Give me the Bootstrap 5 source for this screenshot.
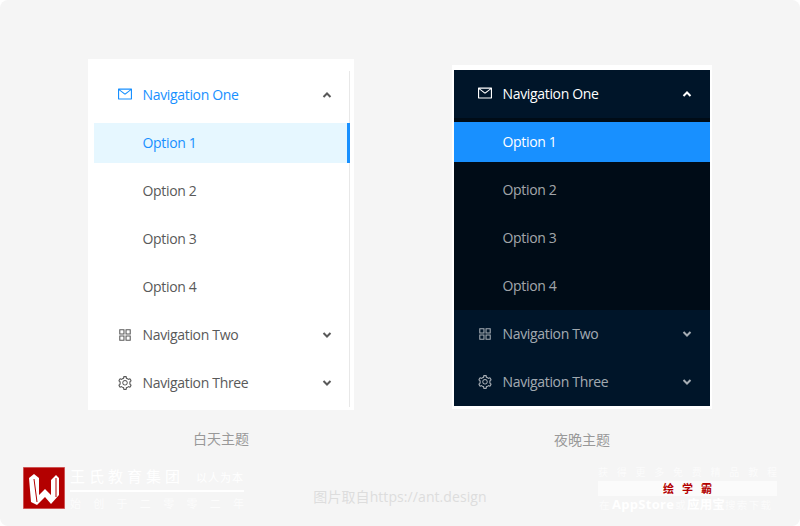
<!DOCTYPE html>
<html lang="zh-CN">
<head>
<meta charset="utf-8">
<title>Ant Design 导航菜单</title>
<link href="https://cdn.jsdelivr.net/npm/bootstrap@5.3.0/dist/css/bootstrap.min.css" rel="stylesheet">
<style>
html,body{margin:0;height:100%;background:#fff;overflow:hidden}
body{font-family:"Open Sans","Noto Sans CJK SC",sans-serif;font-size:14px}
.stage{width:800px;height:526px;background:#f5f5f5;border-radius:8px;position:relative}
.panels{padding:59px 0 0 88px}
.col-light{width:266px}
.col-dark{width:260px;margin-left:98px;margin-top:6px}
.sheet{background:#fff}
.sheet-light{padding:12px 4px 3px 6px}
.sheet-dark{padding:5px 2px 3px}
.menu-light{border-right:1px solid #e8e8e8;padding:4px 0;color:#595959}
.menu-dark{background:#001529;color:rgba(255,255,255,.65);padding:4px 0}
.sub-dark{background:#000c17;padding:4px 0}
.entry{height:40px;padding-left:24px;margin-bottom:8px;line-height:40px;white-space:nowrap;letter-spacing:-.33px}
.entry:last-child{margin-bottom:0}
.entry svg.glyph{width:14px;height:14px;margin-right:10.5px;fill:currentColor;flex:none}
.entry svg.raised{margin-top:-2px}
.opt{padding-left:48.5px}
.chev{width:10px;height:6px;margin-left:auto;margin-right:18px;fill:none;stroke:currentColor;stroke-width:2;flex:none}
.menu-light .chev{margin-right:17px}
.menu-light .open{color:#1890ff}
.menu-light .open .chev{color:#595959}
.menu-light .picked{background:#e6f7ff;color:#1890ff;border-right:3px solid #1890ff;margin-right:-1px}
.menu-dark .open{color:#fff;margin-bottom:4px}
.menu-dark .picked{background:#1890ff;color:#fff}
.caption{color:#999;font-size:14px;line-height:20px;text-align:center}
.col-light .caption{margin-top:19px}
.col-dark .caption{margin-top:21px}
.foot{display:grid;grid-template-columns:1fr auto 1fr;align-items:start;padding:0 23px;position:absolute;left:0;top:466px;width:800px}
.brand-mark{width:42px;height:42px;margin:1px 5px 0 0;flex:none}
.brand{width:174px;color:#fff}
.brand-top{height:20px;line-height:20px;font-size:15px;letter-spacing:4px;white-space:nowrap;margin-bottom:4px}
.brand-top span{font-size:11px;letter-spacing:1px;margin-left:12px}
.brand-rule{height:2px;background:#fff;margin-bottom:5px}
.brand-sub{font-size:11px;line-height:14px;opacity:.75}
.credit{color:#ddd;font-size:14px;line-height:21px;letter-spacing:.08px;padding-top:20px}
.promo{width:179px;justify-self:end;color:#fff}
.promo-line{font-size:10px;line-height:12px;opacity:.7;margin-bottom:3px}
.promo-strip{background:#fbfbfb;height:15px;line-height:15px;color:#b30000;font-weight:700;font-size:11px;text-align:center;letter-spacing:8px;padding-left:8px;font-family:"Noto Sans CJK SC",sans-serif}
.promo-last{font-size:11px;line-height:16px;white-space:nowrap;padding-left:1px}
.promo-last b{font-size:12.5px;letter-spacing:.1px}
.promo-last .latin{font-size:13px;letter-spacing:.3px;margin:0 1px}
.promo-last em{font-style:normal;opacity:.7;font-size:10.5px;letter-spacing:1.4px}
.icon-defs{display:none}
</style>
</head>
<body>
<svg class="icon-defs" aria-hidden="true">
  <symbol id="i-mail" viewBox="64 64 896 896"><path d="M928 160H96c-17.7 0-32 14.3-32 32v640c0 17.7 14.3 32 32 32h832c17.7 0 32-14.3 32-32V192c0-17.7-14.3-32-32-32zm-40 110.8V792H136V270.8l-27.6-21.5 39.3-50.5 42.8 33.3h643.1l42.8-33.3 39.3 50.5-27.7 21.5zM833.6 232L512 482 190.4 232l-42.8-33.3-39.3 50.5 27.6 21.5 341.6 265.6a55.99 55.99 0 0 0 68.7 0L888 270.8l27.6-21.5-39.3-50.5-42.7 33.2z"/></symbol>
  <symbol id="i-apps" viewBox="64 64 896 896"><path d="M464 144H160c-8.8 0-16 7.2-16 16v304c0 8.8 7.2 16 16 16h304c8.8 0 16-7.2 16-16V160c0-8.8-7.2-16-16-16zm-52 268H212V212h200v200zm452-268H560c-8.8 0-16 7.2-16 16v304c0 8.8 7.2 16 16 16h304c8.8 0 16-7.2 16-16V160c0-8.8-7.2-16-16-16zm-52 268H612V212h200v200zM464 544H160c-8.8 0-16 7.2-16 16v304c0 8.8 7.2 16 16 16h304c8.8 0 16-7.2 16-16V560c0-8.8-7.2-16-16-16zm-52 268H212V612h200v200zm452-268H560c-8.8 0-16 7.2-16 16v304c0 8.8 7.2 16 16 16h304c8.8 0 16-7.2 16-16V560c0-8.8-7.2-16-16-16zm-52 268H612V612h200v200z"/></symbol>
  <symbol id="i-gear" viewBox="64 64 896 896"><path d="M924.8 625.7l-65.5-56c3.1-19 4.7-38.4 4.7-57.8s-1.6-38.8-4.7-57.8l65.5-56a32.03 32.03 0 0 0 9.3-35.2l-.9-2.6a443.74 443.74 0 0 0-79.7-137.9l-1.8-2.1a32.12 32.12 0 0 0-35.1-9.5l-81.3 28.9c-30-24.6-63.5-44-99.7-57.6l-15.7-85a32.05 32.05 0 0 0-25.8-25.7l-2.7-.5c-52.1-9.4-106.9-9.4-159 0l-2.7.5a32.05 32.05 0 0 0-25.8 25.7l-15.8 85.4a351.86 351.86 0 0 0-99 57.4l-81.9-29.1a32 32 0 0 0-35.1 9.5l-1.8 2.1a446.02 446.02 0 0 0-79.7 137.9l-.9 2.6c-4.5 12.5-.8 26.5 9.3 35.2l66.3 56.6c-3.1 18.8-4.6 38-4.6 57.1 0 19.2 1.5 38.4 4.6 57.1L99 625.5a32.03 32.03 0 0 0-9.3 35.2l.9 2.6c18.1 50.4 44.9 96.9 79.7 137.9l1.8 2.1a32.12 32.12 0 0 0 35.1 9.5l81.9-29.1c29.8 24.5 63.1 43.9 99 57.4l15.8 85.4a32.05 32.05 0 0 0 25.8 25.7l2.7.5a449.4 449.4 0 0 0 159 0l2.7-.5a32.05 32.05 0 0 0 25.8-25.7l15.7-85a350 350 0 0 0 99.7-57.6l81.3 28.9a32 32 0 0 0 35.1-9.5l1.8-2.1c34.8-41.1 61.6-87.5 79.7-137.9l.9-2.6c4.5-12.3.8-26.3-9.3-35zM788.3 465.9c2.5 15.1 3.8 30.6 3.8 46.1s-1.3 31-3.8 46.1l-6.6 40.1 74.7 63.9a370.03 370.03 0 0 1-42.6 73.6L721 702.8l-31.4 25.8c-23.9 19.6-50.5 35-79.3 45.8l-38.1 14.3-17.9 97a377.5 377.5 0 0 1-85 0l-17.9-97.2-37.8-14.5c-28.5-10.8-55-26.2-78.7-45.7l-31.4-25.9-93.4 33.2c-17-22.9-31.2-47.6-42.6-73.6l75.5-64.5-6.5-40c-2.4-14.9-3.7-30.3-3.7-45.5 0-15.3 1.2-30.6 3.7-45.5l6.5-40-75.5-64.5c11.3-26.1 25.6-50.7 42.6-73.6l93.4 33.2 31.4-25.9c23.7-19.5 50.2-34.9 78.7-45.7l37.9-14.3 17.9-97.2c28.1-3.2 56.8-3.2 85 0l17.9 97 38.1 14.3c28.7 10.8 55.4 26.2 79.3 45.8l31.4 25.8 92.8-32.9c17 22.9 31.2 47.6 42.6 73.6L781.8 426l6.5 39.9zM512 326c-97.2 0-176 78.8-176 176s78.8 176 176 176 176-78.8 176-176-78.8-176-176-176zm79.2 255.2A111.6 111.6 0 0 1 512 614c-29.9 0-58-11.7-79.2-32.8A111.6 111.6 0 0 1 400 502c0-29.9 11.7-58 32.8-79.2C454 401.6 482.1 390 512 390c29.9 0 58 11.6 79.2 32.8A111.6 111.6 0 0 1 624 502c0 29.9-11.7 58-32.8 79.2z"/></symbol>
</svg>
<div class="stage d-flex flex-column">
  <div class="panels d-flex align-items-start">
    <div class="col-light">
      <div class="sheet sheet-light">
        <div class="menu-light">
          <div class="entry open d-flex align-items-center">
            <svg class="glyph raised"><use href="#i-mail"/></svg>
            <span>Navigation One</span>
            <svg class="chev" viewBox="0 0 10 6"><path d="M1.5 5L5 1.5 8.5 5"/></svg>
          </div>
          <div class="entry opt picked">Option 1</div>
          <div class="entry opt">Option 2</div>
          <div class="entry opt">Option 3</div>
          <div class="entry opt">Option 4</div>
          <div class="entry d-flex align-items-center">
            <svg class="glyph"><use href="#i-apps"/></svg>
            <span>Navigation Two</span>
            <svg class="chev" viewBox="0 0 10 6"><path d="M1.5 1L5 4.5 8.5 1"/></svg>
          </div>
          <div class="entry d-flex align-items-center">
            <svg class="glyph"><use href="#i-gear"/></svg>
            <span>Navigation Three</span>
            <svg class="chev" viewBox="0 0 10 6"><path d="M1.5 1L5 4.5 8.5 1"/></svg>
          </div>
        </div>
      </div>
      <div class="caption">白天主题</div>
    </div>
    <div class="col-dark">
      <div class="sheet sheet-dark">
        <div class="menu-dark">
          <div class="entry open d-flex align-items-center">
            <svg class="glyph raised"><use href="#i-mail"/></svg>
            <span>Navigation One</span>
            <svg class="chev" viewBox="0 0 10 6"><path d="M1.5 5L5 1.5 8.5 5"/></svg>
          </div>
          <div class="sub-dark mb-1">
            <div class="entry opt picked">Option 1</div>
            <div class="entry opt">Option 2</div>
            <div class="entry opt">Option 3</div>
            <div class="entry opt">Option 4</div>
          </div>
          <div class="entry d-flex align-items-center">
            <svg class="glyph"><use href="#i-apps"/></svg>
            <span>Navigation Two</span>
            <svg class="chev" viewBox="0 0 10 6"><path d="M1.5 1L5 4.5 8.5 1"/></svg>
          </div>
          <div class="entry d-flex align-items-center">
            <svg class="glyph"><use href="#i-gear"/></svg>
            <span>Navigation Three</span>
            <svg class="chev" viewBox="0 0 10 6"><path d="M1.5 1L5 4.5 8.5 1"/></svg>
          </div>
        </div>
      </div>
      <div class="caption">夜晚主题</div>
    </div>
  </div>
  <div class="foot">
    <div class="d-flex align-items-start">
      <svg class="brand-mark" viewBox="0 0 42 42"><rect x=".25" y=".25" width="41.5" height="41.5" fill="#b30000" stroke="#d86a6a" stroke-width=".5"/><path fill="#fff" d="M6 11l5-4 5 4v17l6-6 6 6V13l5-5 3 3v17l-8 9-6-7-8 8-6-3z"/><path fill="none" stroke="#b30000" d="M11 12l3 23M33 11v19"/></svg>
      <div class="brand">
        <div class="brand-top">王氏教育集团<span>以人为本</span></div>
        <div class="brand-rule"></div>
        <div class="brand-sub d-flex justify-content-between"><span>始</span><span>创</span><span>于</span><span>二</span><span>零</span><span>零</span><span>二</span><span>年</span></div>
      </div>
    </div>
    <div class="credit">图片取自https://ant.design</div>
    <div class="promo">
      <div class="promo-line d-flex justify-content-between"><span>获</span><span>得</span><span>更</span><span>多</span><span>免</span><span>费</span><span>精</span><span>品</span><span>教</span><span>程</span></div>
      <div class="promo-strip">绘学霸</div>
      <div class="promo-last"><em>在</em><b class="latin">AppStore</b><em>或</em><b>应用宝</b><em>搜索下载</em></div>
    </div>
  </div>
</div>
<script src="https://cdn.jsdelivr.net/npm/bootstrap@5.3.0/dist/js/bootstrap.bundle.min.js"></script>
</body>
</html>
